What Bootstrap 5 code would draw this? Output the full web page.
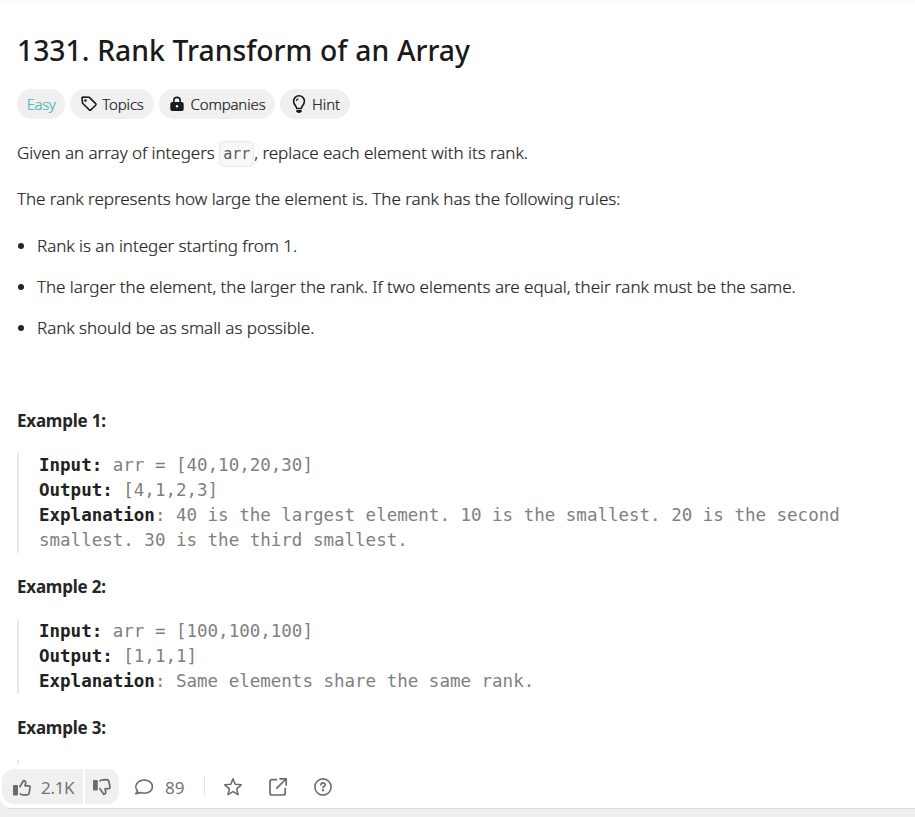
<!DOCTYPE html>
<html lang="en">
<head>
<meta charset="utf-8">
<meta name="viewport" content="width=device-width, initial-scale=1">
<title>1331. Rank Transform of an Array</title>
<link rel="stylesheet" href="https://cdn.jsdelivr.net/npm/bootstrap@5.3.0/dist/css/bootstrap.min.css">
<script src="https://cdn.jsdelivr.net/npm/bootstrap@5.3.0/dist/js/bootstrap.bundle.min.js"></script>
<style>
body{background:#efefef;font-family:"Noto Sans","Open Sans",sans-serif;font-size:17px;line-height:25px;color:#262626}
.panel{height:809px;border-top:4px solid #fafafa;border-bottom:1px solid #dcdcdc;border-bottom-left-radius:10px}
.problem{padding:30px 17px 0}
.title{font-size:28.3px;font-weight:500;line-height:32px;color:#1a1a1a;margin-bottom:23px;word-spacing:.4px}
.chips{gap:5px;margin-bottom:21px}
.chip{height:30px;border-radius:15px;background:#f0f0f0;font-size:15px;font-weight:300;color:#1a1a1a;letter-spacing:-.15px;-webkit-text-stroke:.2px}
.chip svg{stroke:#1a1a1a;-webkit-text-stroke:0}
.easy{color:#46b8b4;width:48px;letter-spacing:-.5px}
.topics{width:84px}.companies{width:116px}.hint{width:70px}
.prose{font-weight:300;letter-spacing:-.035px;-webkit-text-stroke:.2px}
.prose p{margin-bottom:21px}
.prose p:last-of-type{margin-bottom:22px}
.prose ul{padding-left:20px;margin-bottom:68px}
.prose li+li{margin-top:16px}
.prose code{font-family:"DejaVu Sans Mono",monospace;font-size:15px;line-height:1;color:#595959;background:#f7f7f7;border:1px solid #e8e8e8;border-radius:5px;padding:3px 3px;-webkit-text-stroke:0}
.example{font-weight:700;font-size:17px;letter-spacing:-.22px;margin-bottom:20px}
.sample{border-left:2px solid #e9e9e9;padding-left:20px;margin-bottom:21px;font-family:"DejaVu Sans Mono",monospace;font-size:17.5px;line-height:25px;color:#808080;white-space:pre-wrap}
.sample b{color:#212121}
.sample-next{height:30px;border-left:2px solid #e9e9e9}
.actions{height:44px;padding-left:2px;background:#fff;border-bottom-left-radius:10px;color:#737373;font-size:17px}
.votes{height:35px;gap:1.5px;margin-top:5px}
.votes>div{background:#f0f0f0}
.up{width:81px;border-radius:12px 0 0 12px;padding:2px 0 0 10px;letter-spacing:-.3px}
.up span{margin-left:9px}
.down{width:34.5px;border-radius:0 12px 12px 0;padding-left:7px}
.comments{margin-left:15px;gap:11px;padding-top:2px}
.rule{width:1px;height:20px;background:#e5e5e5;margin-left:20px}
.tools{margin-left:18px;gap:25px;padding-top:2px}
</style>
</head>
<body>
<main class="panel bg-white position-relative overflow-hidden">
  <article class="problem">
    <h1 class="title">1331. Rank Transform of an Array</h1>
    <div class="chips d-flex">
      <span class="chip easy d-flex align-items-center justify-content-center">Easy</span>
      <span class="chip topics d-flex align-items-center justify-content-center gap-1"><svg width="18" height="18" viewBox="0 0 18 18" fill="none" stroke-width="1.6" stroke-linejoin="round"><path d="M2 2.8 2.6 8.2 9.2 14.8Q10.1 15.6 11 14.8L15.7 10.2Q16.4 9.4 15.7 8.6L9 2.2 2.8 2Q2 2 2 2.8Z"/><circle cx="5.5" cy="5.5" r=".5" fill="#1a1a1a"/></svg>Topics</span>
      <span class="chip companies d-flex align-items-center justify-content-center gap-1"><svg width="18" height="18" viewBox="0 0 18 18" fill="none"><rect x="2.3" y="7" width="13.4" height="9" rx="2" fill="#1a1a1a" stroke="none"/><path d="M5.8 8V5.6a3.2 3.2 0 0 1 6.4 0V8" stroke-width="1.6"/><circle cx="9" cy="11.3" r="1.2" fill="#fff" stroke="none"/></svg>Companies</span>
      <span class="chip hint d-flex align-items-center justify-content-center gap-1"><svg width="18" height="20" viewBox="0 0 18 20" fill="none" stroke-width="1.6" stroke-linejoin="round"><path d="M6.7 14.5C6.4 11.8 3.6 10.8 3.6 7.2a5.4 5.4 0 0 1 10.8 0c0 3.6-2.8 4.6-3.1 7.3Z"/><path d="M7 16.7h4v.7q-2 1.4-4 0Z" fill="#1a1a1a"/><path d="M6.4 7q.2-2 2-2.4" stroke-width="1.1"/></svg>Hint</span>
    </div>
    <div class="prose">
      <p>Given an array of integers <code>arr</code>, replace each element with its rank.</p>
      <p>The rank represents how large the element is. The rank has the following rules:</p>
      <ul>
        <li>Rank is an integer starting from 1.</li>
        <li>The larger the element, the larger the rank. If two elements are equal, their rank must be the same.</li>
        <li>Rank should be as small as possible.</li>
      </ul>
    </div>
    <p class="example">Example 1:</p>
    <pre class="sample"><b>Input:</b> arr = [40,10,20,30]
<b>Output:</b> [4,1,2,3]
<b>Explanation</b>: 40 is the largest element. 10 is the smallest. 20 is the second smallest. 30 is the third smallest.</pre>
    <p class="example">Example 2:</p>
    <pre class="sample"><b>Input:</b> arr = [100,100,100]
<b>Output:</b> [1,1,1]
<b>Explanation</b>: Same elements share the same rank.</pre>
    <p class="example">Example 3:</p>
    <div class="sample-next"></div>
  </article>
  <footer class="actions position-absolute bottom-0 start-0 end-0 d-flex align-items-center">
    <div class="votes d-flex align-self-start">
      <div class="up d-flex align-items-center"><svg width="20" height="20" viewBox="0 0 20 20" fill="none" stroke="#6b6b6b" stroke-width="1.7" stroke-linejoin="round"><rect x="1" y="7" width="5" height="10.5" rx="1" fill="#6b6b6b" stroke="none"/><path d="M7.6 9.2 11.4 2.7c1.7 0 2.7 1.2 2.3 2.6L13 7.8h3.6q1.7 0 1.5 1.6l-1 5.7q-.3 1.7-2 1.7H11q-1.6 0-3.4-1.2"/></svg><span>2.1K</span></div>
      <div class="down d-flex align-items-center"><svg width="20" height="20" viewBox="0 0 20 20" fill="none" stroke="#6b6b6b" stroke-width="1.7" stroke-linejoin="round"><rect x="1" y="3" width="4.8" height="10.5" rx="1" fill="#6b6b6b" stroke="none"/><path d="M7.4 4.5Q8.6 3 11 2.9l3.7-.2q1.7 0 2.1 1.6l1.2 5.5q.2 1.7-1.5 1.8L13 11.9l.7 2.4c.4 1.5-.5 2.7-2 3L7.4 11.1"/></svg></div>
    </div>
    <div class="comments d-flex align-items-center"><svg width="20" height="20" viewBox="0 0 20 20" fill="none" stroke="#6b6b6b" stroke-width="1.6" stroke-linejoin="round"><path d="M3.7 13.8C1.8 12.2 1.3 9.2 2.6 7c1.5-2.5 4.5-4 7.8-4 4.6 0 8 3 8 6.8s-3.4 6.5-8 6.5c-1.3 0-2.6-.2-3.7-.7L1.8 16.8Z"/></svg><span>89</span></div>
    <div class="rule"></div>
    <div class="tools d-flex align-items-center">
      <svg width="20" height="20" viewBox="0 0 20 20" fill="none" stroke="#6b6b6b" stroke-width="1.6" stroke-linejoin="round"><path d="m10 1.8 2.2 5.5 6 .5-4.5 4 1.3 5.8-5-3-5 3 1.3-5.8-4.5-4 6-.5Z"/></svg>
      <svg width="20" height="20" viewBox="0 0 20 20" fill="none" stroke="#6b6b6b" stroke-width="1.7" stroke-linecap="round" stroke-linejoin="round"><path d="M8.5 2.7H4Q2 2.7 2 4.7V16q0 2 2 2h11.2q2 0 2-2v-4.5M12 1.8h6.2V8M18 2 8.8 11.2"/></svg>
      <svg width="20" height="20" viewBox="0 0 20 20" fill="none" stroke="#6b6b6b" stroke-width="1.6" stroke-linecap="round"><circle cx="10" cy="10" r="8.1"/><path d="M7.9 8c0-2.8 4.3-2.8 4.3-.3 0 1.6-2.2 1.5-2.2 3"/><circle cx="10" cy="13.3" r=".4" fill="#6b6b6b"/></svg>
    </div>
  </footer>
</main>
</body>
</html>
